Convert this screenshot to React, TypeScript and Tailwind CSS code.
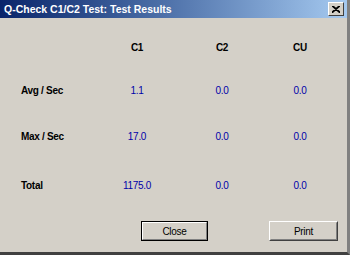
import React from "react";

const rows = [
  { label: "Avg / Sec", c1: "1.1", c2: "0.0", cu: "0.0" },
  { label: "Max / Sec", c1: "17.0", c2: "0.0", cu: "0.0" },
  { label: "Total", c1: "1175.0", c2: "0.0", cu: "0.0" },
];

const grid = "grid grid-cols-[86px_60px_110px_46px] pl-[21px] items-center";

const App = () => {
  return (
    <div
      className="w-[350px] h-[255px] bg-[#d4d0c8] flex flex-col border-r-[3px] border-b-[3px] border-r-[#808080] border-b-[#404040] text-[10px] tracking-[-0.3px] text-black overflow-hidden"
      style={{ fontFamily: "'Liberation Sans', Arial, sans-serif" }}
    >
      {/* title bar */}
      <div className="h-[18px] shrink-0 flex items-center justify-between pl-[4px] pr-[3px] bg-gradient-to-r from-[#0a246a] to-[#a6caf0]">
        <span className="text-white font-bold text-[10.5px] tracking-normal leading-none">
          Q-Check C1/C2 Test: Test Results
        </span>
        <button className="w-[16px] h-[14px] bg-[#d4d0c8] border border-t-white border-l-white border-r-[#404040] border-b-[#404040] flex items-center justify-center">
          <svg width="8" height="7" viewBox="0 0 8 7">
            <path d="M0 0 L8 7 M1 0 L8 6 M8 0 L0 7 M7 0 L0 6" stroke="#000" strokeWidth="1.2" />
          </svg>
        </button>
      </div>

      {/* table */}
      <div className="flex flex-col pt-[20px]">
        <div className={`${grid} h-[18px] font-bold`}>
          <span />
          <span className="text-center">C1</span>
          <span className="text-center">C2</span>
          <span className="text-center">CU</span>
        </div>
        {rows.map((r, i) => (
          <div key={r.label} className={`${grid} h-[18px] ${i === 0 ? "mt-[25px]" : i === 1 ? "mt-[28px]" : "mt-[31px]"}`}>
            <span className="font-bold">{r.label}</span>
            <span className="text-center text-[#0000a8]">{r.c1}</span>
            <span className="text-center text-[#0000a8]">{r.c2}</span>
            <span className="text-center text-[#0000a8]">{r.cu}</span>
          </div>
        ))}
      </div>

      {/* buttons */}
      <div className="flex mt-auto mb-[11px] pl-[141px]">
        <button className="w-[67px] h-[20px] border border-black bg-[#d4d0c8] p-0">
          <div className="w-full h-full border border-t-white border-l-white border-r-[#808080] border-b-[#808080] flex items-center justify-center">
            Close
          </div>
        </button>
        <button className="ml-[61px] w-[69px] h-[20px] bg-[#d4d0c8] border border-t-white border-l-white border-r-[#404040] border-b-[#404040] p-0">
          <div className="w-full h-full border border-transparent border-r-[#808080] border-b-[#808080] flex items-center justify-center">
            Print
          </div>
        </button>
      </div>
    </div>
  );
};

export default App;
